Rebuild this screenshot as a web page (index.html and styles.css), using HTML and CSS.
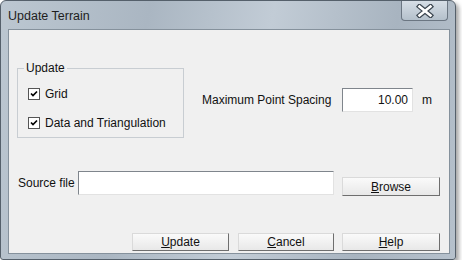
FILE: index.html
```html
<!doctype html>
<html>

<head>
  <meta charset="UTF-8">
  <title>Update Terrain</title>
  <link rel="stylesheet" href="styles.css">
</head>

<body>

  <div class="window">
    <div class="titlebar">
      <span class="title">Update Terrain</span>
      <button class="close" title="Close">
        <svg width="20" height="14" viewBox="0 0 20 14">
          <path d="M4.5 2.5 L15.5 11.5 M15.5 2.5 L4.5 11.5" stroke="#3c4650" stroke-width="5" stroke-linecap="square" />
          <path d="M4.5 2.5 L15.5 11.5 M15.5 2.5 L4.5 11.5" stroke="#fff" stroke-width="2.6" stroke-linecap="square" />
        </svg>
      </button>
    </div>

    <div class="client">
      <div class="top-row">
        <fieldset class="group">
          <legend>Update</legend>
          <label class="check">
            <span class="box"><svg width="8" height="8" viewBox="0 0 8 8"><path d="M1 3.5 L3 5.5 L7 1.5" fill="none" stroke="#000" stroke-width="1.7" /></svg></span>
            Grid
          </label>
          <label class="check">
            <span class="box"><svg width="8" height="8" viewBox="0 0 8 8"><path d="M1 3.5 L3 5.5 L7 1.5" fill="none" stroke="#000" stroke-width="1.7" /></svg></span>
            Data and Triangulation
          </label>
        </fieldset>

        <div class="spacing">
          <span class="spacing-label">Maximum Point Spacing</span>
          <div class="field num">10.00</div>
          <span class="unit">m</span>
        </div>
      </div>

      <div class="source-row">
        <span class="source-label">Source file</span>
        <div class="field source"></div>
        <button class="btn browse"><u>B</u>rowse</button>
      </div>

      <div class="actions">
        <button class="btn update"><u>U</u>pdate</button>
        <button class="btn cancel"><u>C</u>ancel</button>
        <button class="btn help"><u>H</u>elp</button>
      </div>
    </div>
  </div>

</body>

</html>
```

FILE: styles.css
```css
* {
  margin: 0;
  padding: 0;
  box-sizing: border-box;
}

body {
  background: #fff;
  font-family: "Liberation Sans", Arial, sans-serif;
  font-size: 12px;
  color: #111;
}

.window {
  width: 456px;
  height: 260px;
  display: flex;
  flex-direction: column;
  border: 1px solid #55606b;
  border-radius: 6px 6px 3px 3px;
  padding: 0 5px 5px 7px;
  background: linear-gradient(100deg, #bcc7d1 0%, #aab6c2 30%, #c2ccd6 55%, #a8b4c0 80%, #b6c1cc 100%);
  box-shadow: 3px 3px 4px rgba(0, 0, 0, .35);
}

.titlebar {
  height: 28px;
  display: flex;
  justify-content: space-between;
  align-items: flex-start;
}

.title {
  margin-top: 8px;
  line-height: 15px;
  font-size: 12.5px;
  color: #1e1e1e;
}

.close {
  width: 47px;
  height: 20px;
  margin-right: 2px;
  border: 1px solid #6b7682;
  border-top: none;
  border-radius: 0 0 4px 4px;
  background: linear-gradient(#d6dee6, #b4c0cb);
  display: flex;
  align-items: center;
  justify-content: center;
}

.client {
  flex: 1;
  background: #f0f0f0;
  border: 1px solid #85919c;
  padding-top: 31px;
  display: flex;
  flex-direction: column;
}

.top-row {
  display: flex;
  align-items: flex-start;
  padding-left: 8px;
}

.group {
  width: 167px;
  border: 1px solid #c8cdd2;
  padding: 10px 4px 5px 10px;
}

.group legend {
  margin-left: -4px;
  padding: 0 2px;
  line-height: 14px;
}

.check {
  display: flex;
  align-items: center;
  height: 18px;
  gap: 5px;
}

.check + .check {
  margin-top: 11px;
}

.box {
  width: 12px;
  height: 12px;
  border: 1px solid #555;
  background: #fff;
  display: flex;
  align-items: center;
  justify-content: center;
}

.spacing {
  display: flex;
  align-items: center;
  margin-left: 18px;
  margin-top: 27px;
}

.spacing-label {
  width: 140px;
}

.field {
  height: 24px;
  background: #fff;
  border: 1px solid;
  border-color: #7f858c #e2e2e2 #e2e2e2 #7f858c;
}

.num {
  width: 71px;
  text-align: right;
  padding-right: 4px;
  line-height: 22px;
}

.unit {
  margin-left: 9px;
}

.source-row {
  display: flex;
  align-items: flex-start;
  margin-top: 33px;
  padding-left: 9px;
}

.source-label {
  width: 60px;
  line-height: 24px;
}

.source {
  width: 256px;
}

.btn {
  font-family: inherit;
  font-size: 12px;
  color: #111;
  height: 19px;
  border: 1px solid;
  border-color: #dadada #6e6e6e #6e6e6e #dadada;
  background: linear-gradient(#fafafa, #e8e8e8);
}

.browse {
  width: 98px;
  margin-left: 8px;
  margin-top: 6px;
}

.actions {
  display: flex;
  justify-content: flex-end;
  margin-top: 37px;
  padding-right: 9px;
}

.actions .btn {
  height: 18px;
}

.update {
  width: 97px;
  margin-right: 9px;
}

.cancel {
  width: 96px;
  margin-right: 8px;
}

.help {
  width: 98px;
}
```
